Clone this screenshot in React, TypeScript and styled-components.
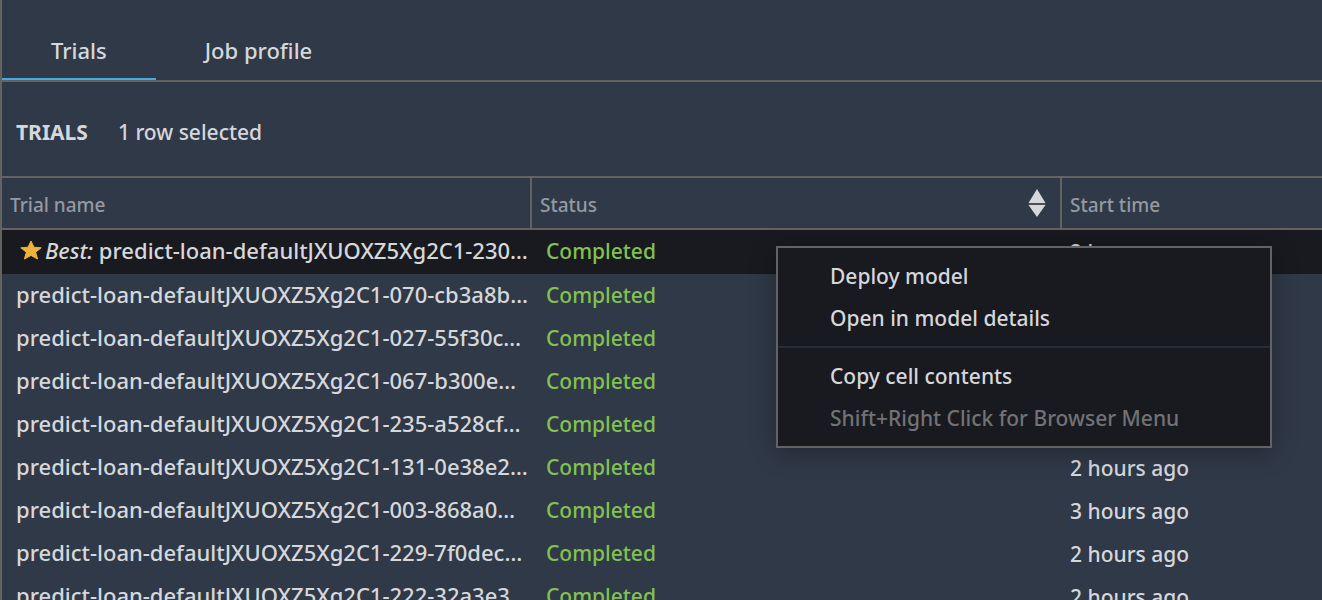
import React from "react";
import styled, { createGlobalStyle } from "styled-components";

const color = {
  panel: "#303948",
  dark: "#191a1f",
  line: "#636363",
  text: "#d6d7db",
  muted: "#949aa3",
  disabled: "#727276",
  green: "#82c250",
  blue: "#44ace0",
  star: "#edb33b",
};

const GlobalStyle = createGlobalStyle`
  * { box-sizing: border-box; }
  body {
    margin: 0;
    background: ${color.panel};
    color: ${color.text};
    font-family: "Noto Sans", "Open Sans", sans-serif;
    font-size: 21px;
    font-weight: 500;
    line-height: 28px;
  }
  button { font: inherit; color: inherit; background: none; border: 0; padding: 0; margin: 0; }
`;

const Panel = styled.main`
  position: relative;
  height: 100vh;
  overflow: hidden;
  border-left: 2px solid ${color.line};
`;

const TabBar = styled.div`
  display: flex;
  border-bottom: 2px solid ${color.line};
`;

const Tab = styled.button<{ $active?: boolean }>`
  && {
    height: 80px;
    padding: 22px 49px 0;
    border-bottom: 2px solid ${(p) => (p.$active ? color.blue : "transparent")};
    font-size: 22px;
  }
`;

const TitleBar = styled.header`
  display: flex;
  align-items: center;
  gap: 30px;
  height: 94px;
  padding: 6px 14px 0;
`;

const Title = styled.h2`
  margin: 0;
  font-size: 21px;
  font-weight: 700;
`;

const Table = styled.table`
  width: 100%;
  table-layout: fixed;
  border-collapse: separate;
  border-spacing: 0;
`;

const HeadCell = styled.th<{ $width?: number }>`
  width: ${(p) => (p.$width ? `${p.$width}px` : "auto")};
  height: 54px;
  padding: 4px 14px 0 8px;
  border: solid ${color.line};
  border-width: 2px ${(p) => (p.$width ? "2px" : "0")} 2px 0;
  color: ${color.muted};
  font-size: 19px;
  font-weight: 500;
  text-align: left;
`;

const HeadContent = styled.div`
  display: flex;
  align-items: center;
  justify-content: space-between;
`;

const SortButton = styled.button`
  && {
    display: flex;
    margin-bottom: 4px;
  }
`;

const Row = styled.tr<{ $selected?: boolean }>`
  height: ${(p) => (p.$selected ? 44 : 43)}px;
  background: ${(p) => (p.$selected ? color.dark : "transparent")};
`;

const Cell = styled.td<{ $tone?: string }>`
  padding: 0 0 2px 14px;
  color: ${(p) => p.$tone ?? color.text};
  white-space: nowrap;
  overflow: hidden;
`;

const NameCell = styled(Cell)`
  padding-bottom: 4px;
  font-size: 22px;
`;

const TimeCell = styled(Cell)`
  padding: 0 0 0 8px;
`;

const BestName = styled.div`
  display: flex;
  align-items: center;
  gap: 3px;
  padding-left: 4px;
`;

const Menu = styled.div`
  position: absolute;
  top: 246px;
  left: 774px;
  width: 496px;
  padding: 7px 0;
  border: 2px solid ${color.line};
  background: ${color.dark};
  box-shadow: 0 4px 24px rgba(0, 0, 0, 0.3);
`;

const MenuItem = styled.button`
  && {
    display: block;
    width: 100%;
    height: 42px;
    padding: 0 52px;
    text-align: left;
    white-space: nowrap;
  }
  &&:disabled { color: ${color.disabled}; }
`;

const Separator = styled.hr`
  height: 2px;
  margin: 7px 0;
  border: 0;
  background: #262e39;
`;

const Star = () => (
  <svg width="22" height="20" viewBox="0 0 22 20" aria-hidden="true">
    <path
      fill={color.star}
      stroke={color.star}
      strokeLinejoin="round"
      d="M11 1 13.9 7.2 21.2 7.8 15.6 12.2 17.6 19 11 15.4 4.4 19 6.4 12.2 0.8 7.8 8.1 7.2Z"
    />
  </svg>
);

const SortIcon = () => (
  <svg width="18" height="28" viewBox="0 0 18 28" aria-hidden="true">
    <path fill={color.text} d="M9 0 17.5 14H0.5ZM0.5 16H17.5L9 28Z" />
    <path fill={color.line} d="M0.5 14.5H17.5V15.5H0.5Z" />
  </svg>
);

const prefix = "predict-loan-defaultJXUOXZ5Xg2C1-";

const trials = [
  { id: "230…", started: "2 hours ago", best: true },
  { id: "070-cb3a8b…", started: "2 hours ago" },
  { id: "027-55f30c…", started: "3 hours ago" },
  { id: "067-b300e…", started: "3 hours ago" },
  { id: "235-a528cf…", started: "2 hours ago" },
  { id: "131-0e38e2…", started: "2 hours ago" },
  { id: "003-868a0…", started: "3 hours ago" },
  { id: "229-7f0dec…", started: "2 hours ago" },
  { id: "222-32a3e3…", started: "2 hours ago" },
];

export default function App() {
  return (
    <>
      <GlobalStyle />
      <Panel>
        <TabBar role="tablist">
          <Tab role="tab" aria-selected="true" $active>Trials</Tab>
          <Tab role="tab" aria-selected="false">Job profile</Tab>
        </TabBar>
        <TitleBar>
          <Title>TRIALS</Title>
          <span>1 row selected</span>
        </TitleBar>
        <Table>
          <thead>
            <tr>
              <HeadCell $width={530}>Trial name</HeadCell>
              <HeadCell $width={530}>
                <HeadContent>
                  Status
                  <SortButton aria-label="Sort by status"><SortIcon /></SortButton>
                </HeadContent>
              </HeadCell>
              <HeadCell>Start time</HeadCell>
            </tr>
          </thead>
          <tbody>
            {trials.map((t) => (
              <Row key={t.id} $selected={t.best}>
                <NameCell>
                  {t.best ? (
                    <BestName>
                      <Star />
                      <span><em>Best:</em> {prefix + t.id}</span>
                    </BestName>
                  ) : (
                    prefix + t.id
                  )}
                </NameCell>
                <Cell $tone={color.green}>Completed</Cell>
                <TimeCell>{t.started}</TimeCell>
              </Row>
            ))}
          </tbody>
        </Table>
        <Menu role="menu">
          <MenuItem role="menuitem">Deploy model</MenuItem>
          <MenuItem role="menuitem">Open in model details</MenuItem>
          <Separator />
          <MenuItem role="menuitem">Copy cell contents</MenuItem>
          <MenuItem role="menuitem" disabled>Shift+Right Click for Browser Menu</MenuItem>
        </Menu>
      </Panel>
    </>
  );
}
